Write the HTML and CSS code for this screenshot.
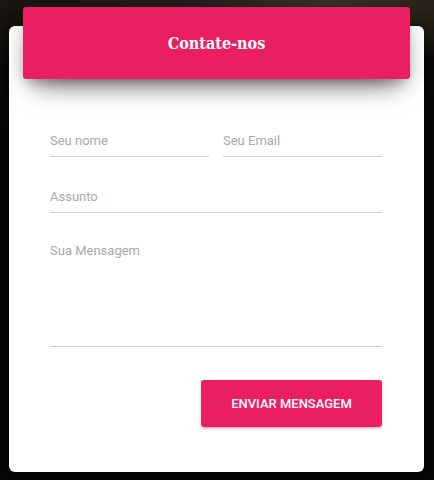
FILE: index.html
```html
<html>
  <head>
    <link rel="stylesheet" href="styles.css">
    <title>Contate-nos</title>
  </head>
  <body>
    <div class="page">
      <div class="card">
        <div class="card-header">
          <h4 class="title">Contate-nos</h4>
        </div>
        <form class="contact">
          <div class="row">
            <input class="field" type="text" placeholder="Seu nome">
            <input class="field" type="email" placeholder="Seu Email">
          </div>
          <input class="field" type="text" placeholder="Assunto">
          <textarea class="field message" placeholder="Sua Mensagem"></textarea>
          <div class="actions">
            <button class="send" type="button">Enviar Mensagem</button>
          </div>
        </form>
      </div>
    </div>
  </body>
</html>
```
FILE: styles.css
```css
body {
  margin: 0;
  background: #060606;
  font-family: Roboto, "Liberation Sans", sans-serif;
}

.page {
  height: 480px;
  box-sizing: border-box;
  padding: 26px 10px 0 9px;
  background:
    radial-gradient(ellipse 260px 60px at 330px 0, #3a3127 0%, rgba(40, 34, 28, 0.6) 55%, rgba(6, 6, 6, 0) 100%),
    linear-gradient(#1c1712 0, #0c0a08 60px, #060606 140px);
}

.card {
  background: #fff;
  border-radius: 6px;
  height: 446px;
  box-shadow: 0 1px 4px rgba(0, 0, 0, 0.3);
}

.card-header {
  margin: 0 14px;
  position: relative;
  top: -19px;
  height: 72px;
  background: #e91e63;
  border-radius: 3px;
  display: flex;
  align-items: center;
  justify-content: center;
  box-shadow: 0 16px 28px -12px rgba(0, 0, 0, 0.6), 0 4px 20px 0 rgba(0, 0, 0, 0.12), 0 8px 10px -5px rgba(0, 0, 0, 0.2);
}

.title {
  margin: 0;
  color: #fff;
  font-family: "DejaVu Serif", "Liberation Serif", serif;
  font-stretch: condensed;
  font-weight: bold;
  font-size: 16px;
}

.contact {
  display: flex;
  flex-direction: column;
  gap: 20px;
  padding: 23px 42px 0 41px;
}

.row {
  display: flex;
  gap: 14px;
}

.row .field {
  flex: 1;
  min-width: 0;
}

.field {
  font-family: Roboto, "Liberation Sans", sans-serif;
  font-size: 13px;
  line-height: 20px;
  padding: 10px 0 5px;
  border: none;
  border-bottom: 1px solid #d2d2d2;
  outline: none;
  background: transparent;
  color: #555;
}

.field::placeholder {
  color: #a8a8a8;
}

.message {
  height: 114px;
  box-sizing: border-box;
  padding: 8px 0 7px;
  resize: none;
}

.actions {
  display: flex;
  justify-content: flex-end;
  margin-top: 13px;
}

.send {
  width: 181px;
  height: 47px;
  border: none;
  border-radius: 3px;
  background: #e91e63;
  color: #fff;
  font-family: Roboto, "Liberation Sans", sans-serif;
  font-weight: 500;
  font-size: 13px;
  text-transform: uppercase;
  box-shadow: 0 2px 2px 0 rgba(233, 30, 99, 0.14), 0 3px 1px -2px rgba(233, 30, 99, 0.2), 0 1px 5px 0 rgba(233, 30, 99, 0.12);
}
```
